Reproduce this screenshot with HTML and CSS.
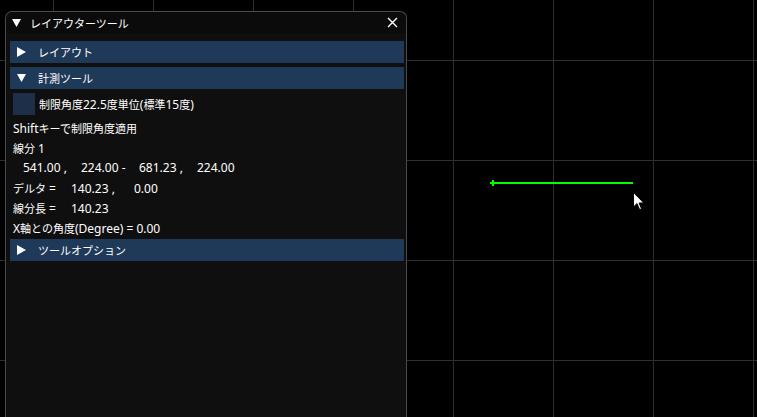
FILE: index.html
```html
<!DOCTYPE html>
<html lang="ja">
<head>
  <meta charset="UTF-8"/>
  <title>レイアウターツール</title>
  <link rel="stylesheet" href="styles.css">
</head>
<body>

  <!-- drawing canvas: measured segment + mouse cursor -->
  <div class="canvas">
    <div class="segment"></div>
    <div class="seg-start"></div>
    <svg class="cursor" width="12" height="19" viewBox="0 0 12 19">
      <path d="M0.5 0.5 L0.5 15 L4 11.6 L6.6 17.6 L8.6 16.8 L6.1 11 L10.8 11 Z" fill="#fff" stroke="#000" stroke-width="1"/>
    </svg>
  </div>

  <div class="tool-window">
    <div class="title-bar">
      <svg class="arrow" width="9" height="8" viewBox="0 0 9 8"><polygon points="0,0 9,0 4.5,8" fill="#fff"/></svg>
      <span class="title jp">レイアウターツール</span>
      <svg class="close" width="11" height="11" viewBox="0 0 11 11">
        <path d="M1 1 L10 10 M10 1 L1 10" stroke="#fff" stroke-width="1.4"/>
      </svg>
    </div>

    <div class="body">
      <div class="header">
        <svg class="arrow" width="9" height="10" viewBox="0 0 9 10"><polygon points="0,0 9,5 0,10" fill="#fff"/></svg>
        <span class="jp">レイアウト</span>
      </div>

      <div class="header open">
        <svg class="arrow" width="9" height="8" viewBox="0 0 9 8"><polygon points="0,0 9,0 4.5,8" fill="#fff"/></svg>
        <span class="jp">計測ツール</span>
      </div>

      <label class="check-row">
        <span class="checkbox"></span>
        <span><span class="jp">制限角度</span>22.5<span class="jp">度単位</span>(<span class="jp">標準</span>15<span class="jp">度</span>)</span>
      </label>

      <div class="line">Shift<span class="jp">キーで制限角度適用</span></div>
      <div class="line"><span class="jp">線分</span> 1</div>
      <div class="line">
        <span class="cell first">541.00 ,</span><span class="cell">224.00 -</span><span class="cell">681.23 ,</span><span class="cell">224.00</span>
      </div>
      <div class="line">
        <span class="label"><span class="jp">デルタ</span> =</span><span class="cell">140.23 ,</span><span class="cell small">0.00</span>
      </div>
      <div class="line">
        <span class="label"><span class="jp">線分長</span> =</span><span class="cell">140.23</span>
      </div>
      <div class="line">X<span class="jp">軸との角度</span>(Degree) = 0.00</div>

      <div class="header last">
        <svg class="arrow" width="9" height="10" viewBox="0 0 9 10"><polygon points="0,0 9,5 0,10" fill="#fff"/></svg>
        <span class="jp">ツールオプション</span>
      </div>
    </div>
  </div>

</body>
</html>
```

FILE: styles.css
```css
body {
  margin: 0;
  width: 757px;
  height: 417px;
  overflow: hidden;
  position: relative;
  background-color: #000;
  background-image:
    linear-gradient(to right, #2e2e2e 1px, transparent 1px),
    linear-gradient(to bottom, #2e2e2e 1px, transparent 1px);
  background-size: 100px 100px;
  background-position: 53px 60px;
  font-family: "Noto Sans", "Noto Sans CJK JP", sans-serif;
  font-size: 12px;
  color: #fff;
}

/* kana/kanji run a bit smaller than latin in this ui font */
.jp {
  font-family: "Noto Sans CJK JP", sans-serif;
  font-size: 11px;
}

.canvas {
  position: absolute;
  inset: 0;
}

.segment {
  position: absolute;
  left: 490px;
  top: 182px;
  width: 143px;
  height: 2px;
  background: #00ff00;
}

.seg-start {
  position: absolute;
  left: 492px;
  top: 180px;
  width: 2px;
  height: 6px;
  background: #00ff00;
}

.cursor {
  position: absolute;
  left: 633px;
  top: 192px;
}

.tool-window {
  position: absolute;
  left: 5px;
  top: 11px;
  width: 400px;
  height: 420px;
  background: #0f0f0f;
  border: 1px solid #4a4a55;
  border-bottom: none;
  border-radius: 7px 7px 0 0;
}

.title-bar {
  height: 21px;
  display: flex;
  align-items: center;
  padding-left: 6px;
  background: #0b0b0b;
  border-radius: 7px 7px 0 0;
}

.title-bar .arrow {
  margin-top: 1px;
}

.title {
  margin-left: 9px;
}

.close {
  margin-left: auto;
  margin-right: 8px;
}

.body {
  padding: 8px 2px 0 4px;
}

.header {
  height: 22px;
  display: flex;
  align-items: center;
  background: #1f3958;
  padding-left: 7px;
}

.header .arrow {
  margin-right: 12px;
}

.header + .header {
  margin-top: 4px;
}

.header.last {
  margin-top: 1px;
}

.check-row {
  display: flex;
  align-items: center;
  margin: 4px 0 3px 3px;
}

.checkbox {
  width: 22px;
  height: 22px;
  background: #1d2f49;
  margin-right: 4px;
}

.line {
  height: 20px;
  line-height: 20px;
  padding-left: 3px;
  display: flex;
  align-items: baseline;
  white-space: pre;
}

.cell {
  display: inline-block;
  width: 58px;
}

.cell.first {
  margin-left: 10px;
}

.cell.small {
  margin-left: 5px;
}

.label {
  display: inline-block;
  width: 58px;
}
```
